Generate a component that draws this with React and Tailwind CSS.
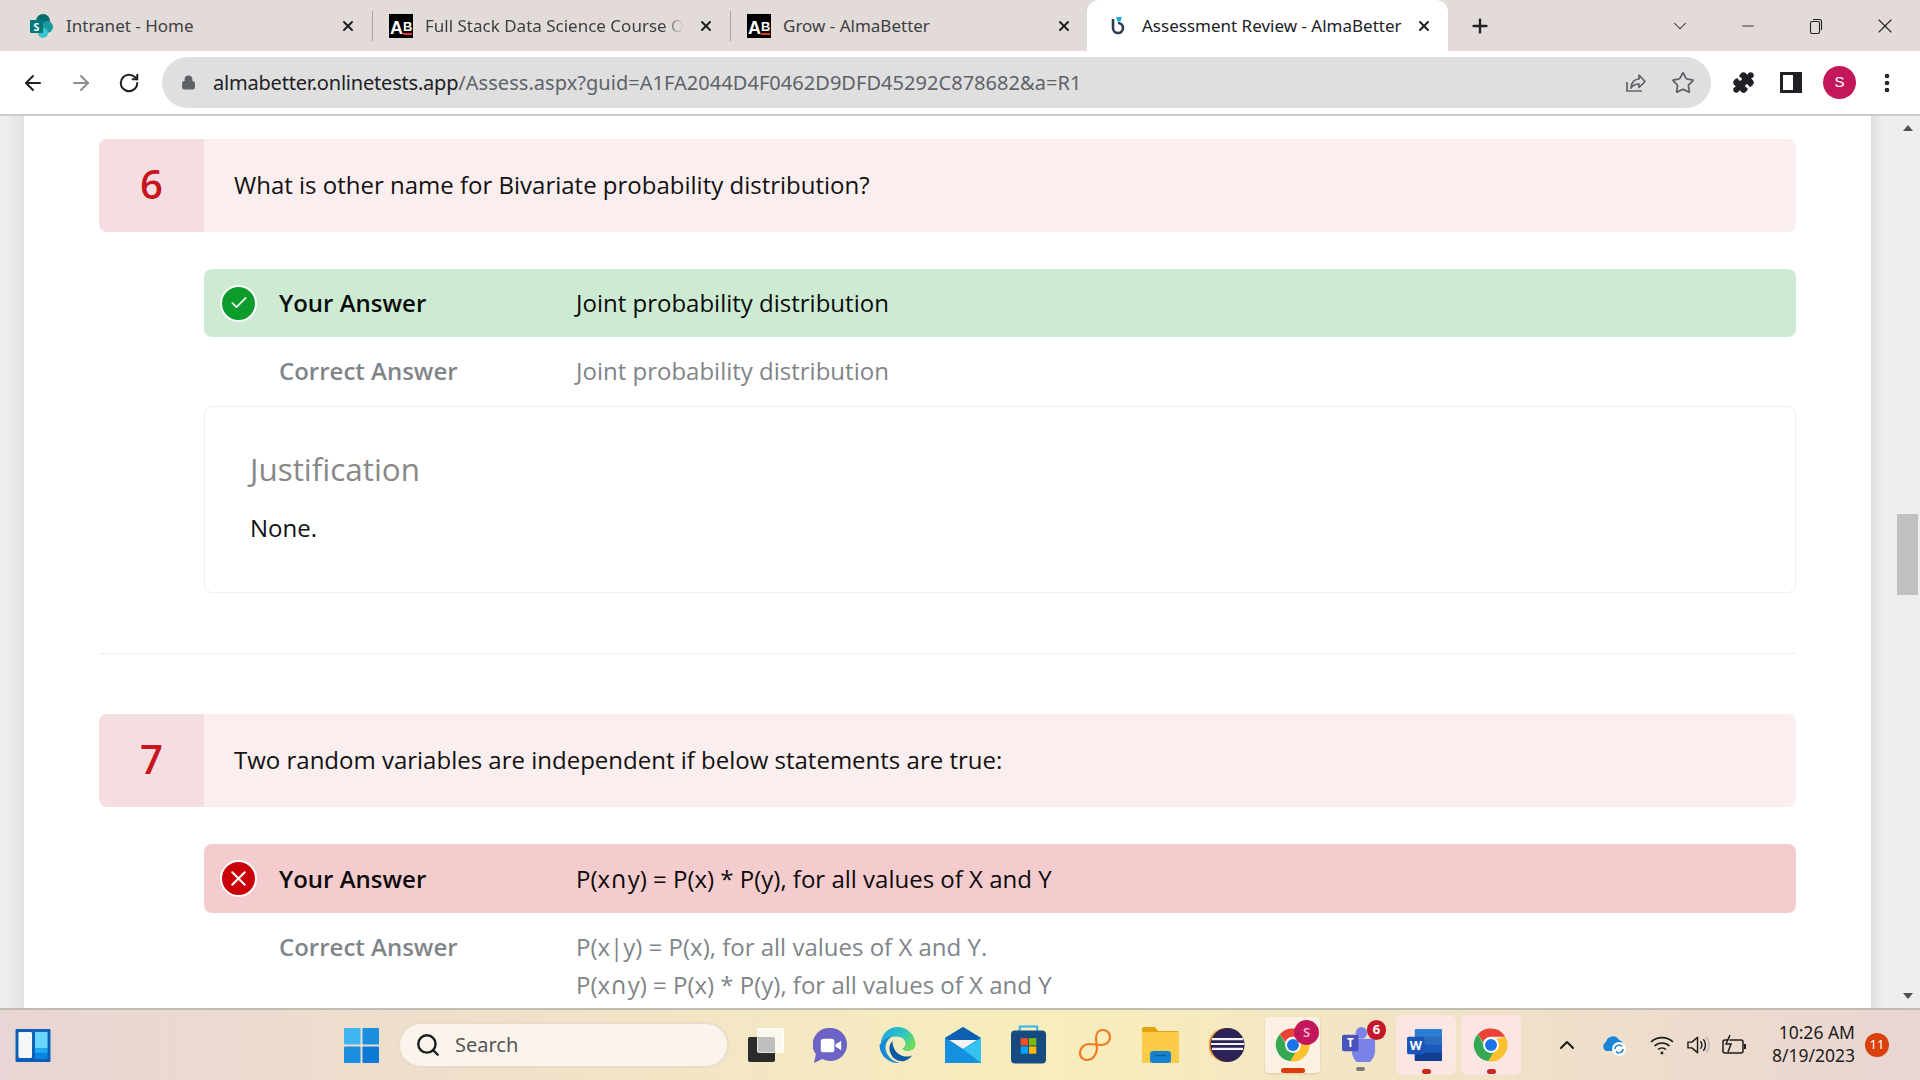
import { ArrowLeft, ArrowRight, RotateCw, Lock, Star, Puzzle, Plus, X, Minus, ChevronDown, ChevronUp, Search, Check, EllipsisVertical } from 'lucide-react';

const sans = "font-['Open_Sans',sans-serif]";
const ui = "font-['Noto_Sans','Open_Sans',sans-serif]";

const SharePointIcon = () => (
  <svg viewBox="0 0 24 24" className="w-[24px] h-[24px] shrink-0">
    <circle cx="13" cy="7" r="7" fill="#036c70" />
    <circle cx="17" cy="13" r="6" fill="#1a9ba1" />
    <circle cx="13" cy="19" r="5" fill="#37c6d0" />
    <rect x="0" y="6" width="13" height="13" rx="1" fill="#03787c" />
    <text x="6.5" y="16.500" textAnchor="middle" fontSize="10.500" fontWeight="700" fill="#fff" fontFamily="Open Sans">S</text>
  </svg>
);

const AbIcon = () => (
  <div className="w-[24px] h-[24px] shrink-0 bg-black flex items-end pl-[1px] pb-[2px] text-white font-bold leading-none font-['Liberation_Sans',sans-serif]">
    <span className="text-[18px] leading-[15px]">A</span>
    <span className="text-[13px] leading-[13px] border-b-2 border-[#e5322d] mb-[1px]">B</span>
  </div>
);

const AlmaIcon = () => (
  <svg viewBox="0 0 16 20" className="w-[16px] h-[20px]">
    <path d="M3 3v9a5 5 0 1 0 5-5" fill="none" stroke="#2d3e50" strokeWidth="2.6" />
    <path d="M6 1h6l-1.500 4.500h-3z" fill="#22a7e0" />
  </svg>
);

const TabClose = ({ className = '' }) => <X size={16} strokeWidth={3} className={`text-[#202124] shrink-0 ${className}`} />;

const TabStrip = () => (
  <div className={`h-[51px] bg-[#e3dbd8] flex items-center shrink-0 text-[17px] text-[#3c4043] ${ui}`}>
    <div className="w-[372px] flex items-center pl-[30px] pr-[16px] shrink-0">
      <SharePointIcon />
      <span className="ml-[12px] flex-1">Intranet - Home</span>
      <TabClose />
    </div>
    <div className="w-px h-[30px] bg-[#a9a5a3] shrink-0" />
    <div className="w-[357px] flex items-center pl-[16px] pr-[16px] shrink-0">
      <AbIcon />
      <span className="ml-[12px] whitespace-nowrap [mask-image:linear-gradient(to_right,black_92%,transparent)]">Full Stack Data Science Course O</span>
      <TabClose className="ml-auto" />
    </div>
    <div className="w-px h-[30px] bg-[#a9a5a3] shrink-0" />
    <div className="w-[356px] flex items-center pl-[16px] pr-[15px] shrink-0">
      <AbIcon />
      <span className="ml-[12px] flex-1">Grow - AlmaBetter</span>
      <TabClose />
    </div>
    <div className="w-[361px] h-[51px] bg-white rounded-t-[12px] flex items-center pl-[23px] pr-[16px] shrink-0 text-[#202124]">
      <AlmaIcon />
      <span className="ml-[16px] flex-1 whitespace-nowrap">Assessment Review - AlmaBetter</span>
      <TabClose />
    </div>
    <Plus size={22} strokeWidth={2.6} className="ml-[21px] text-[#202124] shrink-0" />
    <ChevronDown size={22} strokeWidth={1.100} className="ml-[178px] text-[#222] shrink-0" />
    <Minus size={18} strokeWidth={1.200} className="ml-[48px] text-[#222] shrink-0" />
    <svg viewBox="0 0 16 16" className="ml-[51px] w-[16px] h-[16px] shrink-0" fill="none" stroke="#222" strokeWidth="1.100">
      <rect x="2.5" y="3.5" width="9" height="12" rx="1.500" />
      <path d="M5 1.500h6.500a2 2 0 0 1 2 2V12" />
    </svg>
    <X size={24} strokeWidth={1.100} className="ml-[49px] text-[#222] shrink-0" />
  </div>
);

const ShareIcon = () => (
  <svg viewBox="0 0 24 24" className="w-[24px] h-[24px]" fill="none" stroke="#5f6368" strokeWidth="1.7">
    <path d="M4 11v9h15" />
    <path d="M8 17c0-6 4-9 8-9V4l6 6.500-6 6V13c-4 0-6 1-8 4z" strokeLinejoin="round" />
  </svg>
);

const Toolbar = () => (
  <div className="h-[65px] bg-white border-b-2 border-[#cccccc] flex items-start pt-[6px] shrink-0">
    <ArrowLeft size={24} strokeWidth={2} className="ml-[21px] mt-[14px] text-[#202124] shrink-0" />
    <ArrowRight size={24} strokeWidth={2} className="ml-[24px] mt-[14px] text-[#8c8e91] shrink-0" />
    <RotateCw size={22} strokeWidth={2.2} className="ml-[25px] mt-[15px] text-[#202124] shrink-0" />
    <div className="ml-[22px] w-[1549px] h-[51px] rounded-full bg-[#dfdfdf] flex items-center pl-[19px] pr-[16px] shrink-0">
      <Lock size={15} strokeWidth={2.5} fill="#5f6368" className="text-[#5f6368] shrink-0" />
      <span className={`ml-[17px] text-[20px] text-[#202124] whitespace-nowrap ${ui}`}>
        <span className="tracking-[-0.2px]">almabetter.onlinetests.app</span>
        <span className="text-[#5f6368] tracking-[0.04px]">/Assess.aspx?guid=A1FA2044D4F0462D9DFD45292C878682&amp;a=R1</span>
      </span>
      <div className="ml-auto flex items-center gap-[24px]">
        <ShareIcon />
        <Star size={24} strokeWidth={1.8} className="text-[#5f6368]" />
      </div>
    </div>
    <Puzzle size={23} fill="#202124" strokeWidth={1.5} className="ml-[21px] mt-[14px] text-[#202124] shrink-0" />
    <div className="ml-[25px] mt-[15px] w-[22px] h-[21px] border-[3px] border-[#202124] border-r-[9px] shrink-0" />
    <div className="ml-[21px] mt-[9px] w-[33px] h-[33px] rounded-full bg-[#c2185b] text-white flex items-center justify-center text-[15px] shrink-0 font-['Liberation_Sans',sans-serif]">S</div>
    <EllipsisVertical size={24} strokeWidth={2.6} className="ml-[19px] mt-[14px] text-[#202124] shrink-0" />
  </div>
);

const QuestionHead = ({ num, text }) => (
  <div className="h-[93px] flex rounded-[8px] overflow-hidden">
    <div className="w-[105px] pb-[4px] bg-[#f5dee1] flex items-center justify-center text-[40px] font-semibold text-[#c8141c]">{num}</div>
    <div className="flex-1 pb-[2px] bg-[#faeeee] flex items-center pl-[30px] text-[24px] text-[#111]">{text}</div>
  </div>
);

const StatusDot = ({ ok }) => (
  <div className={`w-[37px] h-[37px] rounded-full border-2 border-white flex items-center justify-center shrink-0 ${ok ? 'bg-[#0b9c2c]' : 'bg-[#c90008]'}`}>
    {ok ? <Check size={20} strokeWidth={2} className="text-white" /> : <X size={25} strokeWidth={2} className="text-white" />}
  </div>
);

const Cap = () => <span className="font-['DejaVu_Sans',sans-serif] text-[24px] leading-none">∩</span>;

const YourAnswer = ({ ok, text, height }) => (
  <div className={`ml-[105px] flex items-center rounded-[8px] text-[24px] text-[#0b0b0b] ${height} ${ok ? 'bg-[#cdebd3]' : 'bg-[#f4cccd]'}`}>
    <div className="ml-[16px]"><StatusDot ok={ok} /></div>
    <div className="ml-[22px] w-[297px] font-semibold">Your Answer</div>
    <div>{text}</div>
  </div>
);

const CorrectAnswer = ({ children, className = '' }) => (
  <div className={`ml-[105px] flex text-[24px] text-[#808589] ${className}`}>
    <div className="ml-[75px] w-[297px] font-semibold leading-[38px]">Correct Answer</div>
    <div className="leading-[38px]">{children}</div>
  </div>
);

const Page = () => (
  <div className={`flex-1 min-h-0 flex ${sans}`}>
    <div className="w-[24px] bg-gradient-to-l from-[#e2e2e2] to-[#eeeeee] to-70% shrink-0" />
    <div className="flex-1 bg-white overflow-hidden px-[75px] pt-[23px]">
      <QuestionHead num="6" text="What is other name for Bivariate probability distribution?" />
      <div className="mt-[37px]">
        <YourAnswer ok text="Joint probability distribution" height="h-[68px]" />
      </div>
      <CorrectAnswer className="pt-[15px] pb-[16px]">
        <div>Joint probability distribution</div>
      </CorrectAnswer>
      <div className="ml-[105px] h-[187px] border border-[#eeeeee] rounded-[8px] pl-[45px] pt-[42px]">
        <div className="text-[31.400px] leading-[40px] text-[#888]">Justification</div>
        <div className="mt-[20px] text-[24px] leading-[38px] text-[#111]">None.</div>
      </div>
      <div className="mt-[60px] h-px bg-[#eeeeee]" />
      <div className="mt-[60px]">
        <QuestionHead num="7" text="Two random variables are independent if below statements are true:" />
      </div>
      <div className="mt-[37px]">
        <YourAnswer text={<>P(x<Cap />y) = P(x) * P(y), for all values of X and Y</>} height="h-[69px]" />
      </div>
      <CorrectAnswer className="pt-[15px]">
        <div>P(x|y) = P(x), for all values of X and Y.</div>
        <div>P(x<Cap />y) = P(x) * P(y), for all values of X and Y</div>
      </CorrectAnswer>
    </div>
    <div className="w-[49px] shrink-0 bg-gradient-to-r from-[#dedede] to-[#eeeeee] to-25% flex flex-col items-end pr-[2px] pt-[9px]">
      <div className="w-[21px] flex justify-center">
        <div className="w-0 h-0 border-x-[5px] border-x-transparent border-b-[6px] border-b-[#505050]" />
      </div>
      <div className="w-[21px] h-[81px] mt-[383px] bg-[#c0c0c0]" />
      <div className="w-[21px] flex justify-center mt-[398px]">
        <div className="w-0 h-0 border-x-[5px] border-x-transparent border-t-[6px] border-t-[#505050]" />
      </div>
    </div>
  </div>
);

const ChromeLogo = ({ size = 36 }) => (
  <svg viewBox="0 0 48 48" width={size} height={size} className="shrink-0">
    <path d="M24 2a22 22 0 0 1 19 11H24a11 11 0 0 0-10.400 7.400L6.500 9.500A22 22 0 0 1 24 2z" fill="#ea4335" />
    <path d="M6.500 9.500l9.600 16.600A9 9 0 0 0 28 33l-7.500 12.700A22 22 0 0 1 6.500 9.500z" fill="#34a853" />
    <path d="M43 13a22 22 0 0 1-22.500 32.700L30 29a9 9 0 0 0-1-12.500z" fill="#fbc02d" />
    <circle cx="24" cy="24" r="10.500" fill="#fff" />
    <circle cx="24" cy="24" r="8" fill="#1a73e8" />
  </svg>
);

const EdgeIcon = () => (
  <svg viewBox="0 0 36 36" className="ml-[31px] w-[37px] h-[36px] shrink-0">
    <defs>
      <linearGradient id="edgeTop" x1="0" y1="0" x2="1" y2="0.6">
        <stop offset="0" stopColor="#1b9de2" />
        <stop offset="0.6" stopColor="#2fc6c0" />
        <stop offset="1" stopColor="#6bdc5c" />
      </linearGradient>
    </defs>
    <path d="M18 0a18 18 0 0 1 18 17c0 5-4 7-8 7-3 0-5-1-5-2.500 2-1 3-3 3-5 0-4-4-7-9-7C8 9.500 3 13 1 17 2 7 9 0 18 0z" fill="url(#edgeTop)" />
    <path d="M1 17c2-4 7-7.500 12-7.500-4 2-7 6-7 11 0 7 6 14 14 15.300A18 18 0 0 1 0 18z" fill="#1688d8" />
    <path d="M13 14c-3 3-4 7-2 12 2 6 8 9 14 8 3-1 6-3 8-6-3 2-8 2-12 0-5-2-8-8-8-14z" fill="#0c59a4" />
  </svg>
);

const Taskbar = () => (
  <div className={`h-[72px] shrink-0 border-t-2 border-[#c4bbb2] bg-gradient-to-r from-[#e8d5d5] via-[#f7eebb] via-55% to-[#e9d5d3] flex items-center ${ui}`}>
    {/* widgets */}
    <svg viewBox="0 0 36 34" className="ml-[15px] w-[36px] h-[33px] shrink-0">
      <rect width="36" height="34" rx="1" fill="#0a5fb4" />
      <rect x="3" y="3" width="14" height="27" rx="1.500" fill="#f4f6f8" />
      <rect x="20" y="3" width="13" height="17" fill="#69d6ff" />
      <rect x="20" y="20" width="13" height="5" fill="#1ea7f5" />
      <rect x="20" y="25" width="13" height="6" fill="#0a84e0" />
    </svg>
    {/* start */}
    <svg viewBox="0 0 36 36" className="ml-[293px] w-[35px] h-[35px] shrink-0">
      <rect width="17" height="17" rx="1" fill="#3fb6f2" />
      <rect x="19" width="17" height="17" rx="1" fill="#1a8fe0" />
      <rect y="19" width="17" height="17" rx="1" fill="#1a8fe0" />
      <rect x="19" y="19" width="17" height="17" rx="1" fill="#0a78d4" />
    </svg>
    <div className="ml-[19px] w-[331px] h-[46px] rounded-full bg-[#fbf4ec] border-2 border-[#e8dccb] flex items-center pl-[15px] shrink-0">
      <Search size={26} strokeWidth={2.2} className="text-[#1c1c1c]" />
      <span className="ml-[14px] text-[20px] text-[#555]">Search</span>
    </div>
    {/* task view */}
    <div className="ml-[19px] w-[36px] h-[34px] relative shrink-0">
      <div className="absolute left-0 bottom-0 w-[27px] h-[25px] rounded-[2px] bg-[#2b2b2b]" />
      <div className="absolute right-0 top-0 w-[27px] h-[25px] rounded-[2px] bg-white/70 border border-white/60" />
    </div>
    {/* meet */}
    <svg viewBox="0 0 36 36" className="ml-[29px] w-[35px] h-[35px] shrink-0">
      <path d="M18 0a17 17 0 0 1 0 34c-3 0-6-.7-8.500-2L1 36l2-9A17 17 0 0 1 18 0z" fill="#6c63c7" />
      <rect x="8" y="11" width="14" height="14" rx="3" fill="#fff" />
      <path d="M23 17l6-4v10l-6-4z" fill="#fff" />
    </svg>
    <EdgeIcon />
    {/* mail */}
    <svg viewBox="0 0 36 36" className="ml-[29px] w-[36px] h-[36px] shrink-0">
      <path d="M18 0L36 11v25H0V11z" fill="#1490df" />
      <path d="M18 0L36 11 18 22 0 11z" fill="#0f5fb0" />
      <path d="M4 13h28l-14 9z" fill="#f4f4f4" />
      <path d="M36 11v25L18 22z" fill="#35c1f1" />
    </svg>
    {/* store */}
    <svg viewBox="0 0 36 40" className="ml-[30px] w-[35px] h-[40px] -mt-[2px] shrink-0">
      <path d="M9 7V2h18v5" fill="none" stroke="#30b4ef" strokeWidth="2" />
      <rect y="6" width="36" height="34" rx="4" fill="#164a80" />
      <rect x="10" y="14" width="7.500" height="7.500" fill="#f25022" />
      <rect x="18.500" y="14" width="7.500" height="7.500" fill="#7fba00" />
      <rect x="10" y="22.500" width="7.500" height="7.500" fill="#00a4ef" />
      <rect x="18.500" y="22.500" width="7.500" height="7.500" fill="#ffb900" />
    </svg>
    {/* orange figure eight */}
    <svg viewBox="0 0 32 32" className="ml-[33px] w-[32px] h-[32px] shrink-0" fill="none" stroke="#f47b20" strokeWidth="2.200">
      <path d="M17 9C17 4 20 1 24 1C28 1 31 4 31 8C31 13 27 16 22 16L10 15C5 15 1 19 1 24C1 28 4 31 8 31C13 31 17 27 18 20Z" strokeLinejoin="round" />
    </svg>
    {/* folder */}
    <svg viewBox="0 0 37 36" className="ml-[31px] w-[37px] h-[36px] shrink-0">
      <path d="M0 2a2 2 0 0 1 2-2h11l3 4h19a2 2 0 0 1 2 2v30H0z" fill="#e0a30a" />
      <rect y="5" width="37" height="31" rx="1" fill="#fdcb4a" />
      <rect x="8" y="24" width="21" height="12" rx="3" fill="#1481d0" />
      <rect x="13" y="28" width="11" height="1.200" fill="#0b5a99" />
    </svg>
    {/* eclipse */}
    <svg viewBox="0 0 37 36" className="ml-[30px] w-[36px] h-[36px] shrink-0">
      <circle cx="17" cy="18" r="17.500" fill="#f09a36" />
      <circle cx="19" cy="18" r="17.500" fill="#2c2255" />
      <path d="M3 12h32M2 17h34M3 22h32" stroke="#f5f5f5" strokeWidth="2.200" />
    </svg>
    {/* active chrome */}
    <div className="ml-[20px] w-[55px] h-[56px] rounded-[4px] bg-[#fbf1e2] shadow-sm relative flex items-center justify-center shrink-0">
      <ChromeLogo />
      <div className="absolute right-[1px] top-[3px] w-[25px] h-[25px] rounded-full bg-[#c2185b] text-[#f5b5cf] flex items-center justify-center text-[13px] font-semibold">S</div>
      <div className="absolute bottom-0 left-[16px] w-[24px] h-[5px] rounded-full bg-[#de3b0c]" />
    </div>
    {/* teams */}
    <div className="ml-[22px] w-[44px] h-[56px] relative shrink-0">
      <svg viewBox="0 0 36 36" className="absolute left-0 top-[10px] w-[35px] h-[35px]">
        <circle cx="20" cy="6" r="6" fill="#7b83eb" />
        <path d="M10 12h24v12a10 12 0 0 1-24 0z" fill="#7b83eb" />
        <rect y="8" width="17" height="17" rx="2" fill="#4b53bc" />
        <text x="8.500" y="21" textAnchor="middle" fontSize="12" fontWeight="700" fill="#fff" fontFamily="Noto Sans">T</text>
      </svg>
      <div className="absolute left-[25px] top-[3px] w-[19px] h-[20px] rounded-full bg-[#c4172c] text-white flex items-center justify-center text-[13px] font-bold">6</div>
      <div className="absolute left-[14px] bottom-[2px] w-[9px] h-[4px] rounded-full bg-[#7d7a76]" />
    </div>
    {/* word */}
    <div className="ml-[10px] w-[60px] h-[60px] flex shrink-0">
      <div className="w-[52px] h-full rounded-l-[6px] rounded-r-[4px] bg-[#fbe6e4] relative flex items-center justify-center">
        <svg viewBox="0 0 36 33" className="w-[35px] h-[32px] ml-[5px]">
          <rect x="8" width="28" height="33" rx="1" fill="#2b7cd3" />
          <rect x="8" y="8" width="28" height="8" fill="#2b6cbf" />
          <rect x="8" y="16" width="28" height="8" fill="#185abd" />
          <rect x="8" y="24" width="28" height="9" fill="#103f91" />
          <rect y="8" width="18" height="18" rx="1.500" fill="#1a55b8" />
          <text x="9" y="22" textAnchor="middle" fontSize="13" fontWeight="700" fill="#fff" fontFamily="Noto Sans">W</text>
        </svg>
        <div className="absolute bottom-[1px] left-[26px] w-[9px] h-[5px] rounded-full bg-[#c8281e]" />
      </div>
      <div className="w-[8px] h-full rounded-r-[6px] bg-[#f9e9e2]" />
    </div>
    {/* chrome */}
    <div className="ml-[5px] w-[60px] h-[60px] rounded-[6px] bg-[#fbe6e4] relative flex items-center justify-center shrink-0">
      <ChromeLogo />
      <div className="absolute bottom-[1px] left-[26px] w-[9px] h-[5px] rounded-full bg-[#c8281e]" />
    </div>
    <ChevronUp size={24} strokeWidth={2} className="ml-[34px] text-[#1c1c1c] shrink-0" />
    {/* onedrive */}
    <svg viewBox="0 0 26 22" className="ml-[22px] w-[26px] h-[22px] shrink-0">
      <path d="M5 17a5 5 0 0 1 0-9 7 7 0 0 1 13-2 5 5 0 0 1 4 6v5z" fill="#1a84d8" />
      <circle cx="18" cy="15" r="7" fill="#fff" />
      <path d="M14 15a4 4 0 0 1 7-2.500M22 15a4 4 0 0 1-7 2.500" fill="none" stroke="#1a84d8" strokeWidth="1.500" />
    </svg>
    {/* wifi */}
    <svg viewBox="0 0 24 20" className="ml-[23px] w-[24px] h-[20px] shrink-0" fill="none" stroke="#1c1c1c" strokeWidth="1.600">
      <path d="M1 7a16 16 0 0 1 22 0M4.500 11a11 11 0 0 1 15 0M8 14.500a6 6 0 0 1 8 0" />
      <circle cx="12" cy="18" r="1.400" fill="#1c1c1c" stroke="none" />
    </svg>
    {/* volume */}
    <svg viewBox="0 0 24 22" className="ml-[13px] w-[23px] h-[22px] shrink-0" fill="none" stroke="#1c1c1c" strokeWidth="1.500">
      <path d="M1 8v6h4l6 5V3L5 8z" strokeLinejoin="round" />
      <path d="M14 7c2 2 2 6 0 8M17 5c3 3 3 9 0 12" />
      <path d="M20 3c4 4 4 12 0 16" stroke="#bbb" />
    </svg>
    {/* battery */}
    <svg viewBox="0 0 25 22" className="ml-[12px] w-[25px] h-[22px] shrink-0" fill="none" stroke="#1c1c1c" strokeWidth="1.500">
      <rect x="1" y="6" width="20" height="13" rx="2" />
      <rect x="22" y="10" width="2" height="5" fill="#1c1c1c" stroke="none" />
      <path d="M8 1L4 10h5l-3 8" fill="#e8d5d5" />
    </svg>
    <div className="ml-[25px] pb-[3px] w-[83px] text-right text-[17.500px] leading-[23px] text-[#1c1c1c] shrink-0 whitespace-nowrap">
      <div>10:26 AM</div>
      <div>8/19/2023</div>
    </div>
    <div className="ml-[10px] w-[24px] h-[24px] rounded-full bg-[#d9400c] text-white flex items-center justify-center text-[13px] shrink-0">11</div>
  </div>
);

const App = () => (
  <div className="w-[1920px] h-[1080px] overflow-hidden flex flex-col bg-white">
    <TabStrip />
    <Toolbar />
    <Page />
    <Taskbar />
  </div>
);

export default App;
